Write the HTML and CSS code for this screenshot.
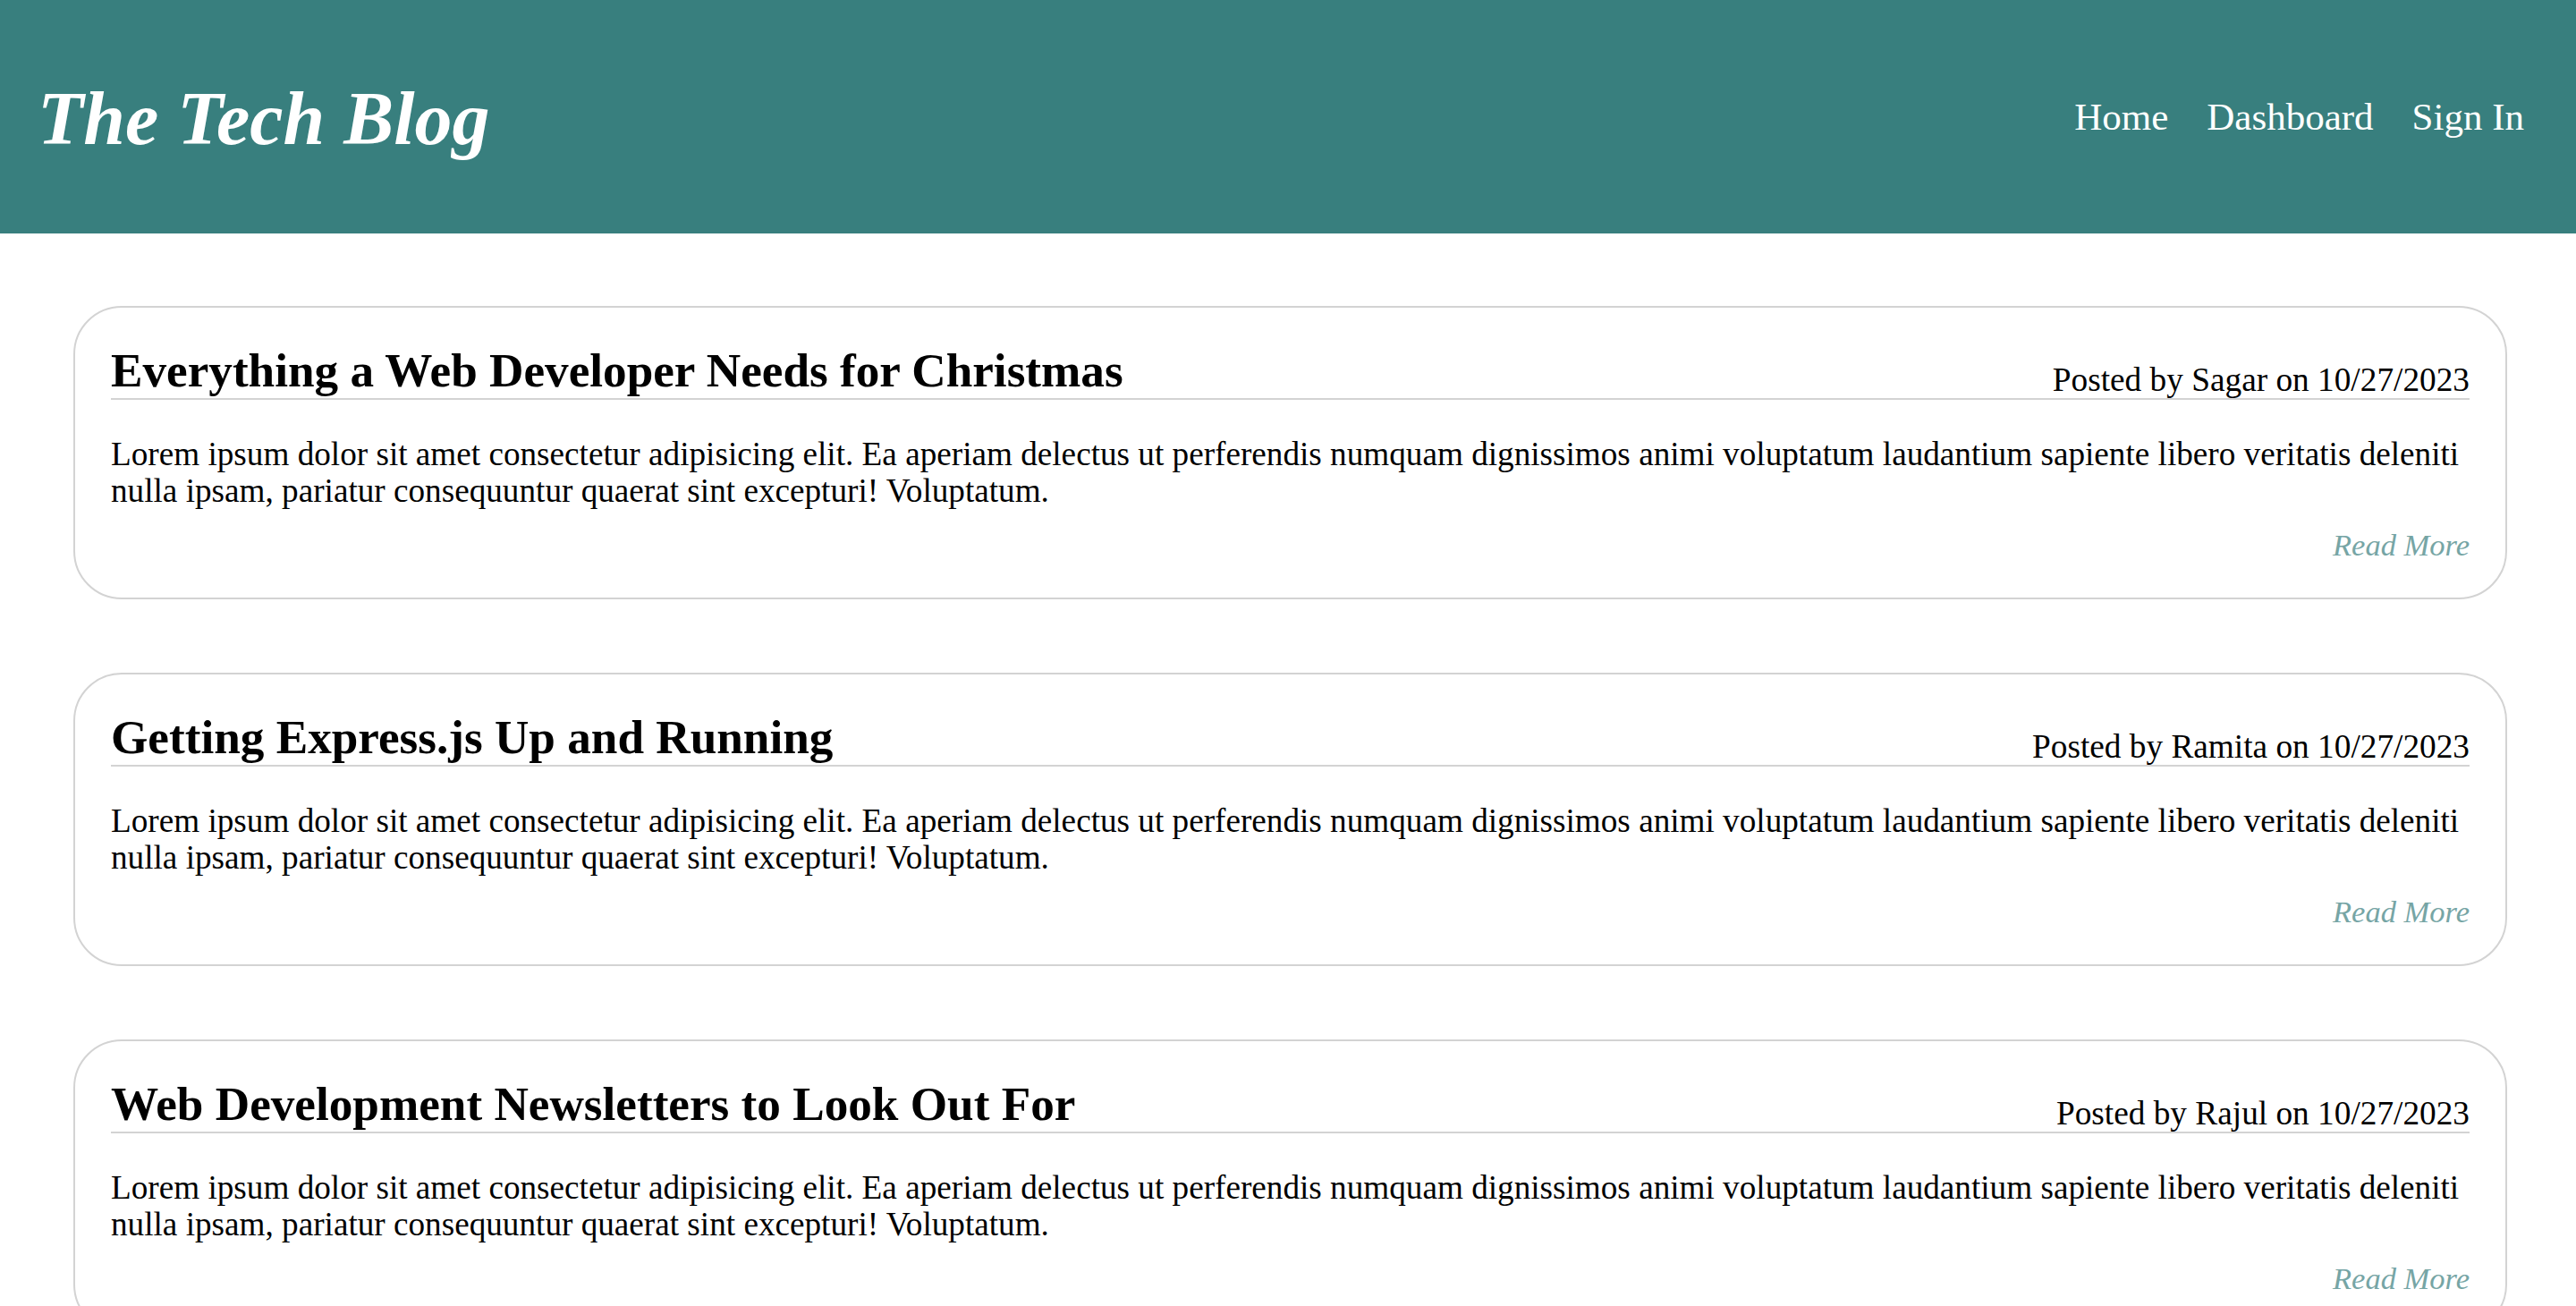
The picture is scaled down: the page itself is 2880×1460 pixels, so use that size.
FILE: index.html
```html
<!DOCTYPE html>
<html lang="en">
<head>
<meta charset="utf-8">
<title>The Tech Blog</title>
<link rel="stylesheet" href="styles.css">
</head>
<body>
<header class="site-header">
  <h1 class="brand">The Tech Blog</h1>
  <nav class="nav">
    <a class="nav-link" href="#">Home</a>
    <a class="nav-link" href="#">Dashboard</a>
    <a class="nav-link" href="#">Sign In</a>
  </nav>
</header>
<main class="posts">
  <article class="post-card">
    <div class="post-head">
      <h2 class="post-title">Everything a Web Developer Needs for Christmas</h2>
      <span class="post-meta">Posted by Sagar on 10/27/2023</span>
    </div>
    <p class="post-body">Lorem ipsum dolor sit amet consectetur adipisicing elit. Ea aperiam delectus ut perferendis numquam dignissimos animi voluptatum laudantium sapiente libero veritatis deleniti nulla ipsam, pariatur consequuntur quaerat sint excepturi! Voluptatum.</p>
    <div class="post-foot"><a class="read-more" href="#">Read More</a></div>
  </article>
  <article class="post-card">
    <div class="post-head">
      <h2 class="post-title">Getting Express.js Up and Running</h2>
      <span class="post-meta">Posted by Ramita on 10/27/2023</span>
    </div>
    <p class="post-body">Lorem ipsum dolor sit amet consectetur adipisicing elit. Ea aperiam delectus ut perferendis numquam dignissimos animi voluptatum laudantium sapiente libero veritatis deleniti nulla ipsam, pariatur consequuntur quaerat sint excepturi! Voluptatum.</p>
    <div class="post-foot"><a class="read-more" href="#">Read More</a></div>
  </article>
  <article class="post-card">
    <div class="post-head">
      <h2 class="post-title">Web Development Newsletters to Look Out For</h2>
      <span class="post-meta">Posted by Rajul on 10/27/2023</span>
    </div>
    <p class="post-body">Lorem ipsum dolor sit amet consectetur adipisicing elit. Ea aperiam delectus ut perferendis numquam dignissimos animi voluptatum laudantium sapiente libero veritatis deleniti nulla ipsam, pariatur consequuntur quaerat sint excepturi! Voluptatum.</p>
    <div class="post-foot"><a class="read-more" href="#">Read More</a></div>
  </article>
</main>
</body>
</html>
```

FILE: styles.css
```css
* {
  box-sizing: border-box;
}

html, body {
  margin: 0;
  padding: 0;
  background: #ffffff;
  color: #000000;
  font-family: "Liberation Serif", "Times New Roman", serif;
}

.site-header {
  height: 261px;
  background: #387f7e;
  display: flex;
  align-items: center;
  justify-content: space-between;
  padding: 0 58px 0 42px;
}

.brand {
  margin: 0;
  color: #ffffff;
  font-size: 84px;
  line-height: 102px;
  font-weight: 700;
  font-style: italic;
  position: relative;
  top: 2px;
}

.nav {
  display: flex;
  gap: 43px;
}

.nav-link {
  color: #ffffff;
  text-decoration: none;
  font-size: 43px;
  line-height: 51px;
}

.posts {
  display: flex;
  flex-direction: column;
  gap: 82px;
  padding: 81px 77px 0 82px;
}

.post-card {
  border: 2px solid #d3d3d3;
  border-radius: 54px;
  padding: 40px 40px 38px;
}

.post-head {
  display: flex;
  justify-content: space-between;
  align-items: flex-end;
  border-bottom: 2px solid #d3d3d3;
}

.post-title {
  margin: 0;
  font-size: 53.2px;
  line-height: 61px;
  font-weight: 700;
}

.post-meta {
  font-size: 37.3px;
  line-height: 41px;
}

.post-body {
  margin: 40px 0 0;
  font-size: 37.2px;
  line-height: 41px;
}

.post-foot {
  display: flex;
  justify-content: flex-end;
  margin-top: 20px;
}

.read-more {
  color: #76a5a5;
  text-decoration: none;
  font-style: italic;
  font-size: 34.5px;
  line-height: 41px;
}
```
